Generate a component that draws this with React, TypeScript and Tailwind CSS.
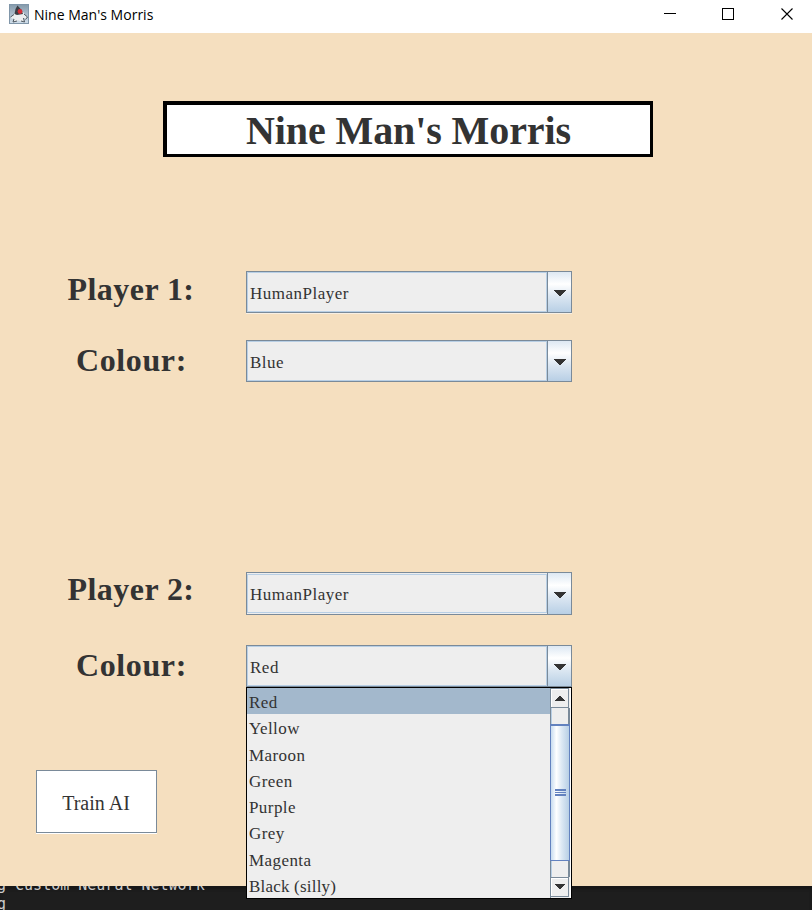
import React from "react";

const serif = "font-['Liberation_Serif',serif] text-[#333333]";

function Arrow({ up = false, small = false }: { up?: boolean; small?: boolean }) {
  const w = small ? 10 : 12;
  const h = small ? 5 : 6;
  return (
    <svg width={w} height={h} viewBox="0 0 12 6" preserveAspectRatio="none" shapeRendering="crispEdges">
      <path d={up ? "M0 6L5 0H7L12 6Z" : "M0 0H12L7 6H5Z"} fill="#333333" />
    </svg>
  );
}

function Combo({ value, focused = false, shadow = false }: { value: string; focused?: boolean; shadow?: boolean }) {
  return (
    <div
      className={`flex w-[326px] shrink-0 border border-[#7a8a99] bg-[#eeeeee] ${focused ? "h-[43px]" : "h-[42px]"} ${shadow ? "shadow-[0_1px_0_#f8f0e4]" : ""}`}
    >
      <div className={`flex w-[300px] border border-[#b8cfe5] ${focused ? "mt-px mb-px" : ""}`}>
        <span className={`${serif} pl-[2px] text-[17px] leading-[20px] tracking-[0.5px] ${focused ? "mt-[10px]" : "mt-[11px]"}`}>{value}</span>
      </div>
      <div className="flex w-[24px] items-center justify-center border-l border-[#7a8a99] bg-[linear-gradient(to_bottom,#dde8f3_0%,#ffffff_30%,#dce7f2_60%,#b8cfe5_100%)] pt-[2px]">
        <Arrow />
      </div>
    </div>
  );
}

function Field({ label, nudge, children }: { label: string; nudge: string; children: React.ReactNode }) {
  return (
    <div className="flex">
      <div className="flex w-[246px] shrink-0 justify-center pl-[16px]">
        <span className={`${serif} h-[36px] whitespace-nowrap text-[32px] leading-[36px] font-bold ${nudge}`}>{label}</span>
      </div>
      {children}
    </div>
  );
}

const colours = ["Red", "Yellow", "Maroon", "Green", "Purple", "Grey", "Magenta", "Black (silly)"];

function Popup() {
  return (
    <div className="absolute top-[42px] left-0 z-10 flex h-[212px] w-[326px] border border-black bg-[#eeeeee]">
      <div className="w-[303px] overflow-hidden">
        {colours.map((c, i) => (
          <div key={c} className={`h-[26.25px] ${i === 0 ? "bg-[#a3b8cc]" : ""}`}>
            <span className={`${serif} block pt-[5px] pl-[2px] text-[17px] leading-[20px] ${c.length > 8 ? "tracking-[0.2px]" : "tracking-[0.42px]"}`}>{c}</span>
          </div>
        ))}
      </div>
      <div className="flex w-[20px] flex-col border-l border-[#7a8a99] bg-[#eeeeee]">
        <div className="flex h-[20px] w-[18px] items-center justify-center border-t border-r border-b border-[#7a8a99] shadow-[inset_1px_1px_0_#ffffff]">
          <Arrow up small />
        </div>
        <div className="h-[16px] w-[19px] border-r-2 border-[#7a8a99] shadow-[inset_1px_0_0_#b8cfe5]" />
        <div className="-ml-px flex h-[137px] w-[20px] flex-col items-center justify-center gap-px border border-t-2 border-[#6382bf] bg-[linear-gradient(to_right,#c8dcf0_0%,#ffffff_30%,#dce8f4_60%,#b8cfe5_100%)] pb-[2px]">
          <div className="h-[2px] w-[11px] bg-[#6382bf]" />
          <div className="h-px w-[11px] bg-[#6382bf]" />
          <div className="h-[2px] w-[11px] bg-[#6382bf]" />
        </div>
        <div className="h-[16px] w-[19px] border-r-2 border-[#7a8a99] shadow-[inset_1px_0_0_#b8cfe5]" />
        <div className="flex h-[20px] w-[18px] items-center justify-center border-t border-r border-b border-[#7a8a99] pb-px shadow-[inset_1px_1px_0_#ffffff]">
          <Arrow small />
        </div>
      </div>
      <div className="w-px bg-white" />
    </div>
  );
}

function DukeIcon() {
  return (
    <svg width="20" height="20" viewBox="0 0 20 20">
      <defs>
        <linearGradient id="duke" x1="0" y1="0" x2="0" y2="1">
          <stop offset="0" stopColor="#8499aa" />
          <stop offset="1" stopColor="#d2dfeb" />
        </linearGradient>
      </defs>
      <rect x=".5" y=".5" width="19" height="19" fill="url(#duke)" stroke="#8096a9" />
      <path d="M7 8L2 13L3 15L5 14L4.500 18L9 16.500L15 18L14.500 14L17 15L18 13L14 8Z" fill="#eceeef" />
      <path d="M8.500 1.500L6.500 5L5.500 10L8 11L14 10L12.500 6Z" fill="#3b3d43" />
      <path d="M1.500 13L5 10.500M15 10L18.500 13L16.500 15.500M5 15L4 18L8 17M14.500 14L15.500 18L12 17" fill="none" stroke="#4d565e" />
      <circle cx="11" cy="7.5" r="2.4" fill="#d52f37" />
    </svg>
  );
}

export default function App() {
  return (
    <div className="flex h-[910px] w-[812px] flex-col overflow-hidden bg-[#1e1e1e]">
      <header className="flex h-[33px] shrink-0 items-start bg-white">
        <div className="mt-[4px] ml-[9px]"><DukeIcon /></div>
        <span className="mt-[5px] ml-[5px] origin-left scale-x-[0.967] font-['Open_Sans',sans-serif] text-[14.5px] leading-[20px] whitespace-nowrap text-black">Nine Man's Morris</span>
        <svg className="mt-[8px] mr-[19px] ml-auto" width="130" height="13" viewBox="0 0 130 13" fill="none" stroke="black">
          <path d="M1 5.5H13M59.5 .5H70.5V11.5H59.5Z" shapeRendering="crispEdges" />
          <path d="M118.500 .5L129.500 11.500M129.500 .5L118.500 11.500" strokeWidth="1.1" />
        </svg>
      </header>

      <main className="flex h-[853px] shrink-0 flex-col bg-[#f5dfbf]">
        <div className="mt-[68px] ml-[163px] flex h-[56px] w-[490px] justify-center border-t-4 border-r-[3px] border-b-[3px] border-l-4 border-black bg-white">
          <h1 className={`${serif} mt-[2px] text-[40px] leading-[48px] font-bold tracking-[-0.1px] whitespace-nowrap`}>Nine Man's Morris</h1>
        </div>

        <section className="mt-[114px] flex flex-col gap-[27px]">
          <Field label="Player 1:" nudge="mt-0 tracking-[0.45px]"><Combo value="HumanPlayer" shadow /></Field>
          <Field label="Colour:" nudge="mt-[2px] pl-px tracking-[0.6px]"><Combo value="Blue" /></Field>
        </section>

        <section className="mt-[190px] flex flex-col gap-[30px]">
          <Field label="Player 2:" nudge="-mt-px tracking-[0.45px]"><Combo value="HumanPlayer" focused /></Field>
          <Field label="Colour:" nudge="mt-[2px] pl-px tracking-[0.6px]">
            <div className="relative">
              <Combo value="Red" />
              <Popup />
            </div>
          </Field>
        </section>

        <button className={`${serif} mt-[83px] ml-[36px] h-[63px] w-[121px] border border-[#7a8a99] bg-white pt-[2px] pr-px text-[20px] shadow-[0_1px_0_#ffffff]`}>
          Train AI
        </button>
      </main>

      <footer className="h-[24px] overflow-hidden bg-[#1e1e1e] shadow-[inset_0_3px_3px_#171717]">
        <pre className="-mt-[10px] -ml-[3px] font-['DejaVu_Sans_Mono',monospace] text-[15px] leading-[19px] text-[#cccccc]">{"g Custom Neural Network\ng"}</pre>
      </footer>
    </div>
  );
}
